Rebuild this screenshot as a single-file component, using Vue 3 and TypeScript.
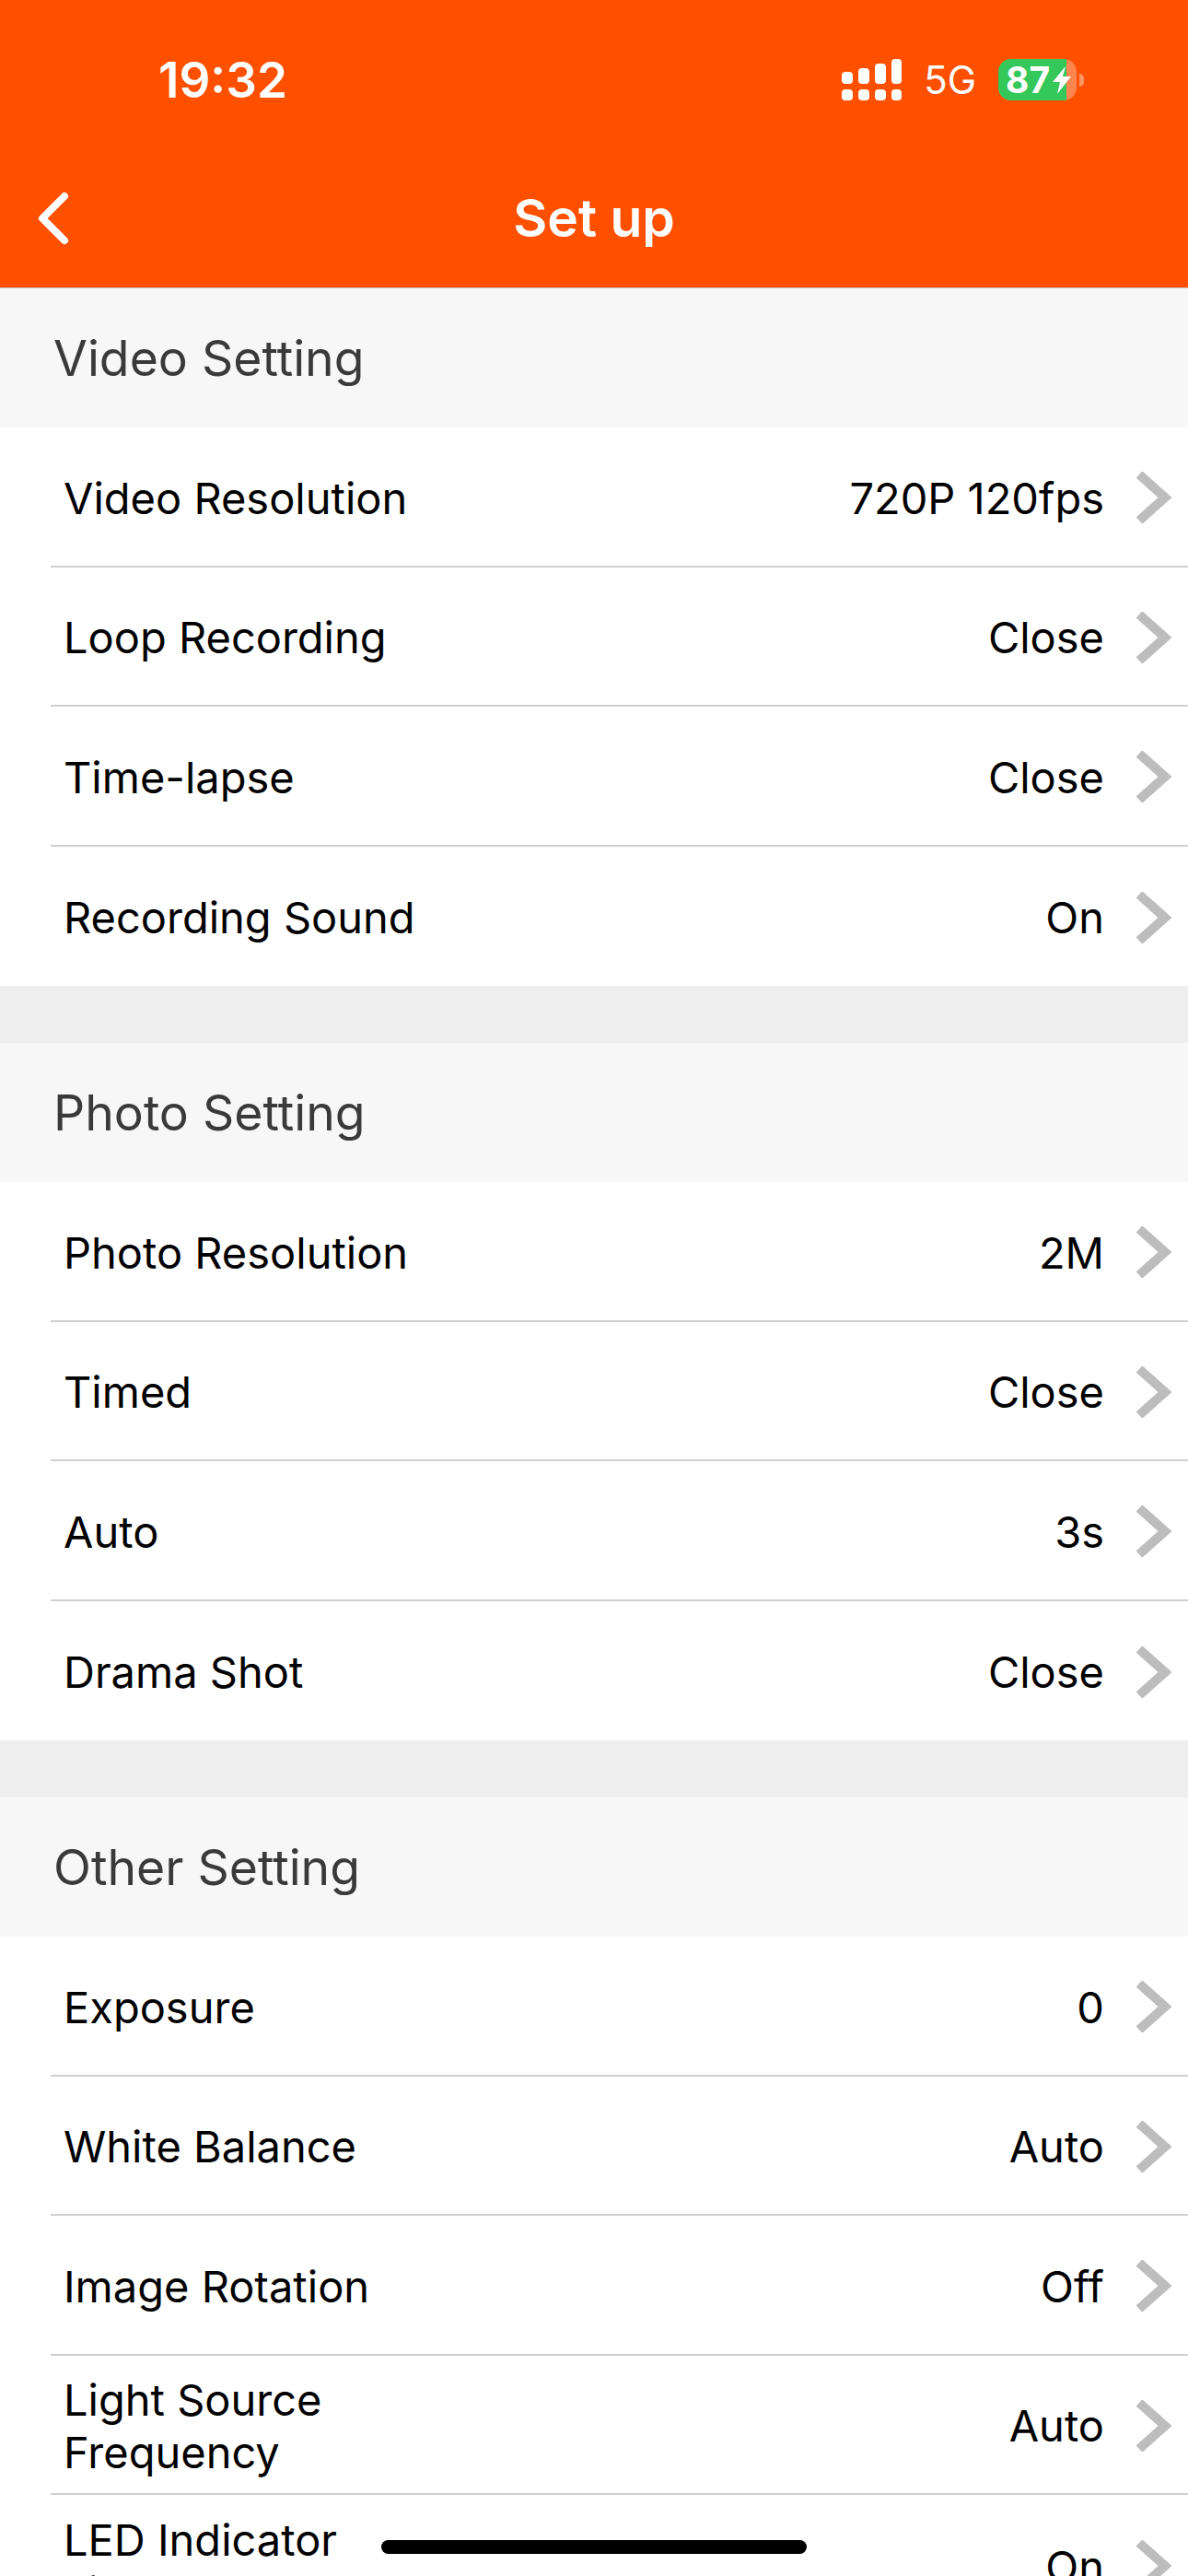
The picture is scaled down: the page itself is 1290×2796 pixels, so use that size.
<template>
  <div class="screen">
    <header class="top-bar">
      <div class="status">
        <span class="status__time">19:32</span>
        <div class="status__right">
          <svg class="status__signal" width="65" height="45" viewBox="0 0 65 45" fill="#fff" aria-hidden="true">
            <rect x="0" y="14" width="12" height="13" rx="4" />
            <rect x="18" y="10" width="12" height="17" rx="4" />
            <rect x="36" y="5" width="12" height="22" rx="4" />
            <rect x="54" y="0" width="11" height="27" rx="4" />
            <rect x="0" y="33" width="12" height="12" rx="4" />
            <rect x="18" y="33" width="12" height="12" rx="4" />
            <rect x="36" y="33" width="12" height="12" rx="4" />
            <rect x="54" y="33" width="11" height="12" rx="4" />
          </svg>
          <span class="status__net">5G</span>
          <div class="battery">
            <div class="battery__body">
              <div class="battery__fill"></div>
              <span class="battery__text">87</span>
              <svg class="battery__bolt" width="20" height="30" viewBox="0 0 20 30" aria-hidden="true">
                <path d="M14 0 L0 17 H8 L5 30 L20 11 H11 Z" fill="#fff" />
              </svg>
            </div>
            <div class="battery__nub"></div>
          </div>
        </div>
      </div>
      <div class="nav">
        <svg class="nav__back" width="40" height="66" viewBox="0 0 40 66" aria-hidden="true">
          <path d="M30 8 L6 32 L30 56" fill="none" stroke="#fff" stroke-width="8" stroke-linecap="round" stroke-linejoin="round" />
        </svg>
        <h1 class="nav__title">Set up</h1>
      </div>
    </header>

    <section v-for="section in sections" :key="section.title" class="group">
      <h2 class="group__title">{{ section.title }}</h2>
      <div v-for="row in section.rows" :key="row.label" class="row">
        <div class="row__inner">
          <span class="row__label">{{ row.label }}</span>
          <span class="row__value">{{ row.value }}</span>
          <svg class="row__chevron" width="40" height="56" viewBox="0 0 40 56" aria-hidden="true">
            <path d="M3 3 L31 28 L3 53" fill="none" stroke="#bdbdbd" stroke-width="10" />
          </svg>
        </div>
      </div>
    </section>

    <div class="home-bar"></div>
  </div>
</template>

<script setup lang="ts">
interface SettingRow {
  label: string
  value: string
}

interface SettingSection {
  title: string
  rows: SettingRow[]
}

const sections: SettingSection[] = [
  {
    title: 'Video Setting',
    rows: [
      { label: 'Video Resolution', value: '720P 120fps' },
      { label: 'Loop Recording', value: 'Close' },
      { label: 'Time-lapse', value: 'Close' },
      { label: 'Recording Sound', value: 'On' },
    ],
  },
  {
    title: 'Photo Setting',
    rows: [
      { label: 'Photo Resolution', value: '2M' },
      { label: 'Timed', value: 'Close' },
      { label: 'Auto', value: '3s' },
      { label: 'Drama Shot', value: 'Close' },
    ],
  },
  {
    title: 'Other Setting',
    rows: [
      { label: 'Exposure', value: '0' },
      { label: 'White Balance', value: 'Auto' },
      { label: 'Image Rotation', value: 'Off' },
      { label: 'Light Source Frequency', value: 'Auto' },
      { label: 'LED Indicator Light', value: 'On' },
    ],
  },
]
</script>

<style>
html,
body {
  margin: 0;
  background: #fff;
}
</style>

<style scoped>
.screen {
  position: relative;
  width: 1290px;
  height: 2796px;
  overflow: hidden;
  background: #fff;
  font-family: Inter, "Liberation Sans", sans-serif;
  color: #000;
}

.top-bar {
  box-sizing: border-box;
  height: 313px;
  background: #ff5000;
  border-bottom: 1px solid #c8c8c8;
  color: #fff;
}

.status {
  display: flex;
  align-items: center;
  justify-content: space-between;
  height: 45px;
  padding: 64px 113px 0 172px;
}

.status__time {
  font-size: 53px;
  font-weight: 600;
}

.status__right {
  display: flex;
  align-items: center;
}

.status__net {
  margin: 0 24px;
  font-size: 42px;
  line-height: 45px;
}

.battery {
  display: flex;
  align-items: center;
}

.battery__body {
  position: relative;
  display: flex;
  align-items: center;
  width: 85px;
  height: 45px;
  border-radius: 14px;
  background: rgba(255, 255, 255, 0.3);
}

.battery__fill {
  position: absolute;
  top: 0;
  bottom: 0;
  left: 0;
  width: 74px;
  border-radius: 14px 0 0 14px;
  background: #34c759;
}

.battery__text {
  position: relative;
  padding-left: 8px;
  font-size: 39px;
  font-weight: 700;
  line-height: 45px;
}

.battery__bolt {
  position: absolute;
  top: 8px;
  left: 59px;
}

.battery__nub {
  width: 5px;
  height: 14px;
  margin-left: 3px;
  border-radius: 0 5px 5px 0;
  background: rgba(255, 255, 255, 0.4);
}

.nav {
  position: relative;
  display: flex;
  align-items: center;
  justify-content: center;
  height: 66px;
  margin-top: 94px;
}

.nav__back {
  position: absolute;
  top: 2px;
  left: 40px;
}

.nav__title {
  margin: 0;
  font-size: 57px;
  font-weight: 600;
}

.group {
  padding-bottom: 62px;
  background: #eee;
}

.group__title {
  display: flex;
  align-items: center;
  height: 151px;
  margin: 0;
  padding-left: 58px;
  background: #f7f7f7;
  color: #3a3a3a;
  font-size: 53.5px;
  font-weight: 400;
}

.row {
  height: 151.5px;
  padding-left: 55px;
  background: #fff;
}

.row__inner {
  box-sizing: border-box;
  display: flex;
  align-items: center;
  height: 100%;
  padding: 3px 16px 0 14px;
  border-bottom: 2px solid #d0d0d0;
}

.row:last-child .row__inner {
  border-bottom: none;
}

.row__label {
  flex: 1;
  max-width: 395px;
  font-size: 47px;
  line-height: 57px;
}

.row__value {
  margin-left: auto;
  font-size: 47px;
}

.row__chevron {
  flex-shrink: 0;
  margin-left: 35px;
}

.home-bar {
  position: absolute;
  top: 2757px;
  left: 414px;
  width: 462px;
  height: 15px;
  border-radius: 8px;
  background: #000;
}
</style>
